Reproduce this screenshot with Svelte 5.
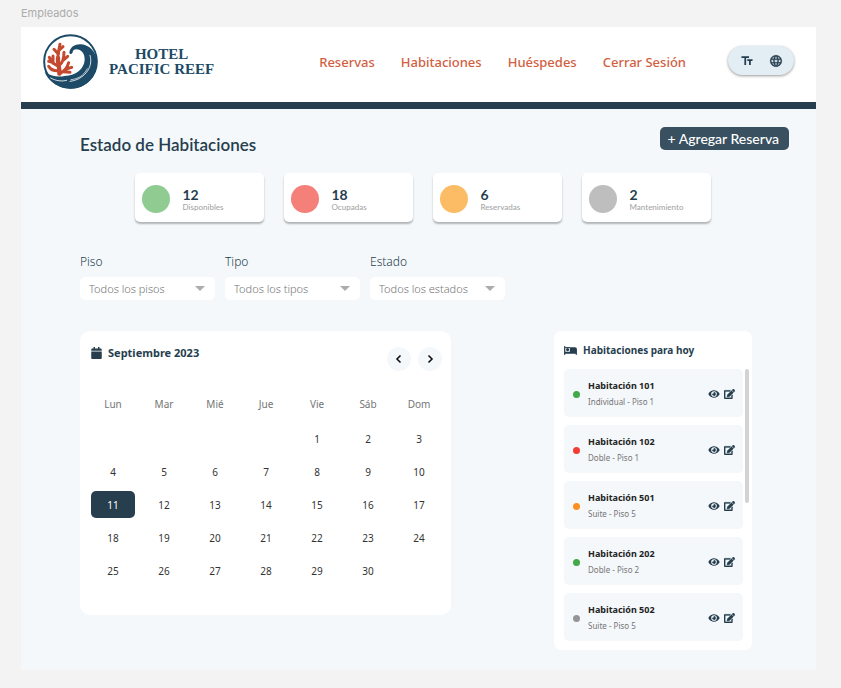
<script>
  const links = ['Reservas', 'Habitaciones', 'Huéspedes', 'Cerrar Sesión'];

  const stats = [
    { count: 12, label: 'Disponibles', tone: 'free' },
    { count: 18, label: 'Ocupadas', tone: 'busy' },
    { count: 6, label: 'Reservadas', tone: 'held' },
    { count: 2, label: 'Mantenimiento', tone: 'off' }
  ];

  const filters = [
    { id: 'piso', label: 'Piso', options: ['Todos los pisos', 'Piso 1', 'Piso 2', 'Piso 5'] },
    { id: 'tipo', label: 'Tipo', options: ['Todos los tipos', 'Individual', 'Doble', 'Suite'] },
    { id: 'estado', label: 'Estado', options: ['Todos los estados', 'Disponible', 'Ocupada', 'Reservada'] }
  ];

  const weekdays = ['Lun', 'Mar', 'Mié', 'Jue', 'Vie', 'Sáb', 'Dom'];
  const firstOffset = 4;
  const weeks = Array.from({ length: 5 }, (_, w) =>
    Array.from({ length: 7 }, (_, d) => {
      const n = w * 7 + d - firstOffset + 1;
      return n >= 1 && n <= 30 ? n : null;
    })
  );
  let selected = $state(11);

  const rooms = [
    { number: 101, detail: 'Individual - Piso 1', tone: 'free' },
    { number: 102, detail: 'Doble - Piso 1', tone: 'busy' },
    { number: 501, detail: 'Suite - Piso 5', tone: 'held' },
    { number: 202, detail: 'Doble - Piso 2', tone: 'free' },
    { number: 502, detail: 'Suite - Piso 5', tone: 'off' }
  ];
</script>

<p class="tag">Empleados</p>

<div class="frame">
  <header>
    <a class="brand" href="#inicio">
      <svg class="logo" viewBox="15 12 165 165" aria-hidden="true">
        <circle cx="97.5" cy="94.5" r="79" fill="#fff" stroke="#1d4a66" stroke-width="6" />
        <path fill="#1d4a66" d="M94 68C97 50 111 42 129 43C156 45 175 67 177 96C176 143 142 176 98 176C64 176 33 157 20 126C40 139 60 142 80 138C116 136 138 116 140 90C141 71 130 58 115 58C108 58 104 62 104 67C102 74 95 73 94 68Z" />
        <g fill="none" stroke="#fff" stroke-linecap="round">
          <path stroke-width="2.500" d="M156 76C168 113 136 150 96 154" />
          <path stroke-width="2" d="M148 116C137 138 119 147 99 149" />
          <path stroke-width="2.500" d="M38 144C54 153 72 155 86 151" />
        </g>
        <g fill="none" stroke="#c4492e" stroke-width="9" stroke-linecap="round" stroke-linejoin="round">
          <path stroke-width="13" d="M64 131C66 112 58 100 60 84" />
          <path d="M60 88C58 70 64 56 66 43" />
          <path d="M61 72L48 58M64 60L75 50" />
          <path d="M62 108C48 104 40 96 34 82M45 100V78M40 96L32 94" />
          <path d="M64 122C50 124 38 118 32 109" />
          <path d="M64 106C76 98 78 84 78 67M77 90L89 79" />
          <path d="M66 130C80 124 88 112 92 98M84 117L101 112M76 125L96 127" />
        </g>
      </svg>
      <span class="name">HOTEL<br />PACIFIC REEF</span>
    </a>

    <nav aria-label="Principal">
      {#each links as link}
        <a href={'#' + link.toLowerCase().replace(' ', '-')}>{link}</a>
      {/each}
    </nav>

    <div class="tools">
      <button type="button" aria-label="Tamaño de texto">
        <svg viewBox="0 0 24 24" aria-hidden="true"><path d="M2.500 4v3h5v12h3V7h5V4h-13zm19 5h-9v3h3v7h3v-7h3V9z" /></svg>
      </button>
      <button type="button" aria-label="Idioma">
        <svg viewBox="0 0 24 24" aria-hidden="true"><path stroke="currentColor" stroke-width=".5" d="M11.990 2C6.470 2 2 6.480 2 12s4.470 10 9.990 10C17.520 22 22 17.520 22 12S17.520 2 11.990 2zm6.930 6h-2.950c-.32-1.250-.78-2.450-1.380-3.560 1.840.63 3.370 1.910 4.330 3.560zM12 4.040c.83 1.200 1.480 2.530 1.910 3.960h-3.820c.43-1.430 1.080-2.760 1.910-3.960zM4.260 14C4.100 13.360 4 12.690 4 12s.1-1.360.26-2h3.380c-.08.66-.14 1.320-.14 2s.06 1.340.14 2H4.260zm.82 2h2.950c.32 1.250.78 2.450 1.380 3.560-1.840-.63-3.370-1.900-4.330-3.560zm2.950-8H5.080c.96-1.660 2.490-2.930 4.330-3.560C8.810 5.550 8.350 6.750 8.030 8zM12 19.960c-.83-1.200-1.480-2.530-1.910-3.960h3.820c-.43 1.430-1.080 2.760-1.910 3.960zM14.340 14H9.660c-.09-.66-.16-1.320-.16-2s.07-1.350.16-2h4.680c.09.65.16 1.320.16 2s-.07 1.340-.16 2zm.25 5.560c.6-1.110 1.060-2.310 1.380-3.560h2.950c-.96 1.650-2.490 2.930-4.330 3.560zM16.360 14c.08-.66.14-1.320.14-2s-.06-1.340-.14-2h3.380c.16.640.26 1.310.26 2s-.1 1.360-.26 2h-3.380z" /></svg>
      </button>
    </div>
  </header>

  <main>
    <div class="title-row">
      <h1>Estado de Habitaciones</h1>
      <button class="add" type="button">+ Agregar Reserva</button>
    </div>

    <ul class="stats">
      {#each stats as s}
        <li>
          <span class="disc {s.tone}"></span>
          <span class="stat-text"><strong>{s.count}</strong><small>{s.label}</small></span>
        </li>
      {/each}
    </ul>

    <div class="filters">
      {#each filters as f}
        <div class="filter">
          <label for={f.id}>{f.label}</label>
          <div class="select">
            <select id={f.id}>
              {#each f.options as o}<option>{o}</option>{/each}
            </select>
            <svg viewBox="0 0 10 5" aria-hidden="true"><path d="M0 0h10L5 5z" /></svg>
          </div>
        </div>
      {/each}
    </div>

    <div class="panels">
      <section class="calendar">
        <div class="cal-head">
          <h2>
            <svg viewBox="0 0 448 512" aria-hidden="true"><path d="M12 192h424c6.600 0 12 5.400 12 12v260c0 26.500-21.500 48-48 48H48c-26.500 0-48-21.500-48-48V204c0-6.600 5.400-12 12-12zm436-44v-36c0-26.500-21.500-48-48-48h-48V12c0-6.600-5.400-12-12-12h-40c-6.600 0-12 5.400-12 12v52H160V12c0-6.600-5.400-12-12-12h-40c-6.600 0-12 5.400-12 12v52H48C21.500 64 0 85.500 0 112v36c0 6.600 5.400 12 12 12h424c6.600 0 12-5.400 12-12z" /></svg>
            Septiembre 2023
          </h2>
          <div class="arrows">
            <button type="button" aria-label="Mes anterior"><svg viewBox="0 0 10 10" aria-hidden="true"><path d="M6.500 1.500L3 5l3.500 3.500" /></svg></button>
            <button type="button" aria-label="Mes siguiente"><svg viewBox="0 0 10 10" aria-hidden="true"><path d="M3.500 1.500L7 5 3.500 8.500" /></svg></button>
          </div>
        </div>
        <table>
          <thead>
            <tr>{#each weekdays as d}<th scope="col">{d}</th>{/each}</tr>
          </thead>
          <tbody>
            {#each weeks as week}
              <tr>
                {#each week as day}
                  <td>
                    {#if day}
                      <button type="button" class:selected={day === selected} onclick={() => (selected = day)}>{day}</button>
                    {/if}
                  </td>
                {/each}
              </tr>
            {/each}
          </tbody>
        </table>
      </section>

      <section class="rooms">
        <h2>
          <svg viewBox="0 0 640 448" aria-hidden="true"><path d="M32 0c18 0 32 14 32 32v256h224V96c0-18 14-32 32-32h224c53 0 96 43 96 96v256c0 18-14 32-32 32s-32-14-32-32v-32H64v32c0 18-14 32-32 32S0 434 0 416V32C0 14 14 0 32 0zm144 96a80 80 0 1 1 0 160 80 80 0 1 1 0-160z" /><path d="M50 50h250v46H50z" /></svg>
          Habitaciones para hoy
        </h2>
        <div class="list">
          <ul>
            {#each rooms as r}
              <li>
                <span class="dot {r.tone}"></span>
                <span class="room-text"><strong>Habitación {r.number}</strong><small>{r.detail}</small></span>
                <button type="button" aria-label="Ver habitación {r.number}">
                  <svg class="eye" viewBox="0 0 576 512" aria-hidden="true"><path d="M572.520 241.400C518.290 135.590 410.930 64 288 64S57.680 135.640 3.480 241.410a32.350 32.350 0 0 0 0 29.190C57.710 376.410 165.070 448 288 448s230.320-71.640 284.520-177.410a32.350 32.350 0 0 0 0-29.190zM288 400a144 144 0 1 1 144-144 143.930 143.930 0 0 1-144 144zm0-240a95.310 95.310 0 0 0-25.310 3.790 47.850 47.850 0 0 1-66.900 66.900A95.780 95.780 0 1 0 288 160z" /></svg>
                </button>
                <button type="button" aria-label="Editar habitación {r.number}">
                  <svg class="edit" viewBox="0 0 576 512" aria-hidden="true"><path stroke="currentColor" stroke-width="16" d="M402.600 83.200l90.200 90.200c3.800 3.800 3.800 10 0 13.800L274.400 405.600l-92.800 10.300c-12.400 1.400-22.900-9.100-21.500-21.500l10.300-92.800L388.800 83.200c3.800-3.800 10-3.800 13.800 0zm162-22.900l-48.800-48.800c-15.200-15.200-39.900-15.200-55.200 0l-35.400 35.400c-3.800 3.800-3.800 10 0 13.800l90.200 90.200c3.800 3.800 10 3.800 13.800 0l35.400-35.400c15.200-15.300 15.200-40 0-55.200zM384 346.200V448H64V128h229.800c3.200 0 6.200-1.300 8.500-3.500l40-40c7.600-7.600 2.200-20.500-8.500-20.500H48C21.500 64 0 85.500 0 112v352c0 26.500 21.500 48 48 48h352c26.500 0 48-21.500 48-48V306.200c0-10.700-12.900-16-20.500-8.500l-40 40c-2.200 2.300-3.500 5.300-3.500 8.500z" /></svg>
                </button>
              </li>
            {/each}
          </ul>
          <span class="thumb"></span>
        </div>
      </section>
    </div>
  </main>
</div>

<style>
  :global(body) {
    margin: 0;
    background: #f3f3f3;
  }
  :global(#app) {
    padding: 0 25px 18px 21px;
    font-family: 'Noto Sans', 'Open Sans', sans-serif;
    color: #263e4e;
  }
  h1, h2, p, ul { margin: 0; padding: 0; }
  ul { list-style: none; }
  button {
    border: 0;
    padding: 0;
    background: none;
    font: inherit;
    color: inherit;
    cursor: pointer;
  }
  a { text-decoration: none; }
  svg { display: block; fill: currentColor; flex: none; }

  .tag {
    font: 11px/27px Inter, sans-serif;
    color: #acacac;
  }
  .frame { background: #f4f8fb; }

  header {
    display: flex;
    align-items: center;
    height: 75px;
    padding: 0 22px;
    background: #fff;
    border-bottom: 7px solid #263e4e;
  }
  .brand {
    display: flex;
    align-items: center;
    gap: 11px;
    padding-bottom: 6px;
    color: #1d4a66;
  }
  .logo { width: 55px; height: 55px; }
  .name {
    font: bold 15px/15px 'Liberation Serif', serif;
    text-align: center;
    white-space: nowrap;
  }
  nav {
    flex: 1;
    display: flex;
    justify-content: flex-end;
    gap: 26px;
    margin-right: 42px;
    padding-bottom: 6px;
    font: 500 13px/20px 'Noto Sans', sans-serif;
    white-space: nowrap;
  }
  nav a { color: #d2603f; }
  .tools {
    display: flex;
    align-items: center;
    justify-content: center;
    gap: 15px;
    width: 66px;
    height: 29px;
    margin-bottom: 8px;
    border-radius: 15px;
    background: #e2edf4;
    box-shadow: 0 1px 3px rgb(0 0 0 / 40%);
  }
  .tools svg { width: 14px; height: 14px; }

  main { padding: 18px 27px 20px 59px; }
  .title-row {
    display: flex;
    justify-content: space-between;
    align-items: flex-start;
  }
  h1 {
    font: 600 17px/24px Lato, sans-serif;
    padding-top: 6px;
  }
  .add {
    height: 23px;
    padding: 0 10px 0 8px;
    border-radius: 5px;
    background: #38505f;
    color: #fff;
    font: 500 14px/23px Lato, sans-serif;
  }

  .stats {
    display: flex;
    justify-content: center;
    gap: 20px;
    padding: 16px 24px 0 0;
  }
  .stats li {
    box-sizing: border-box;
    display: flex;
    align-items: center;
    gap: 13px;
    width: 129px;
    height: 49px;
    padding: 3px 7px 0;
    border-radius: 5px;
    background: #fff;
    box-shadow: 0 2px 2px rgb(0 0 0 / 28%);
  }
  .disc {
    width: 28px;
    height: 28px;
    border-radius: 50%;
  }
  .disc.free { background: #90cb92; }
  .disc.busy { background: #f57f79; }
  .disc.held { background: #fcbc66; }
  .disc.off { background: #bebebe; }
  .stat-text strong, .stat-text small, .room-text strong, .room-text small { display: block; }
  .stat-text strong { font: bold 14px/15px Lato, sans-serif; }
  .stat-text small { font: 500 8px/10px Lato, sans-serif; color: #a6a6a6; }

  .filters {
    display: flex;
    gap: 10px;
    padding-top: 30px;
  }
  .filter { width: 135px; }
  .filter label {
    display: block;
    font: 300 12px/20px 'Noto Sans', sans-serif;
    color: #263e4e;
  }
  .select {
    display: flex;
    align-items: center;
    margin-top: 5px;
    position: relative;
  }
  select {
    appearance: none;
    width: 100%;
    height: 23px;
    padding: 0 25px 0 9px;
    border: 0;
    border-radius: 5px;
    background: #fff;
    color: #757575;
    font: 300 11px/23px 'Noto Sans', sans-serif;
  }
  .select svg {
    position: absolute;
    right: 10px;
    width: 10px;
    height: 5px;
    color: #acacac;
    pointer-events: none;
  }

  .panels {
    display: flex;
    justify-content: space-between;
    align-items: flex-start;
    padding: 31px 37px 0 0;
  }
  .calendar, .rooms {
    box-sizing: border-box;
    background: #fff;
  }
  .calendar {
    width: 371px;
    padding: 16px 3px 25px 4px;
    border-radius: 10px;
  }
  .cal-head {
    display: flex;
    justify-content: space-between;
    padding: 0 6px 0 7px;
  }
  h2 {
    display: flex;
    align-items: center;
    font: bold 11px/16px 'Noto Sans', sans-serif;
  }
  .calendar h2 { gap: 6px; height: 12px; }
  .calendar h2 svg { width: 11px; height: 12px; }
  .arrows { display: flex; gap: 7px; }
  .arrows button {
    display: grid;
    place-items: center;
    width: 24px;
    height: 24px;
    border-radius: 50%;
    background: #f4f8fb;
    color: #111;
  }
  .arrows svg {
    width: 10px;
    height: 10px;
    fill: none;
    stroke: currentColor;
    stroke-width: 1.6;
  }
  table {
    width: 100%;
    margin-top: 12px;
    border-collapse: separate;
    border-spacing: 7px 6px;
    table-layout: fixed;
    font-size: 10px;
    line-height: 14px;
    color: #333;
  }
  th {
    height: 30px;
    padding: 0;
    font-weight: 400;
    color: #757575;
  }
  td { height: 27px; padding: 0; }
  td button {
    display: block;
    width: 100%;
    height: 27px;
    border-radius: 5px;
  }
  td button.selected { background: #263e4e; color: #fff; }

  .rooms {
    width: 198px;
    padding: 10px 9px 9px 10px;
    border-radius: 7px;
  }
  .rooms h2 {
    gap: 6px;
    font-size: 10px;
    line-height: 18px;
  }
  .rooms h2 svg { width: 13px; height: 9px; }
  .list { position: relative; padding-top: 10px; }
  .list ul { display: grid; gap: 8px; }
  .list li {
    box-sizing: border-box;
    display: flex;
    align-items: center;
    gap: 4px;
    height: 48px;
    padding: 2px 8px 0 9px;
    border-radius: 5px;
    background: #f4f8fb;
  }
  .dot {
    width: 7px;
    height: 7px;
    margin-right: 4px;
    border-radius: 50%;
  }
  .dot.free { background: #43a847; }
  .dot.busy { background: #f23d36; }
  .dot.held { background: #fc8f1f; }
  .dot.off { background: #959595; }
  .room-text { flex: 1; }
  .room-text strong { font-size: 9px; line-height: 16px; color: #222; }
  .room-text small { font-size: 8px; line-height: 16px; color: #757575; }
  .eye { width: 12px; height: 10px; }
  .edit { width: 11px; height: 10px; }
  .thumb {
    position: absolute;
    top: 10px;
    right: -6px;
    width: 4px;
    height: 134px;
    border-radius: 2px;
    background: #d3d3d3;
  }
</style>
